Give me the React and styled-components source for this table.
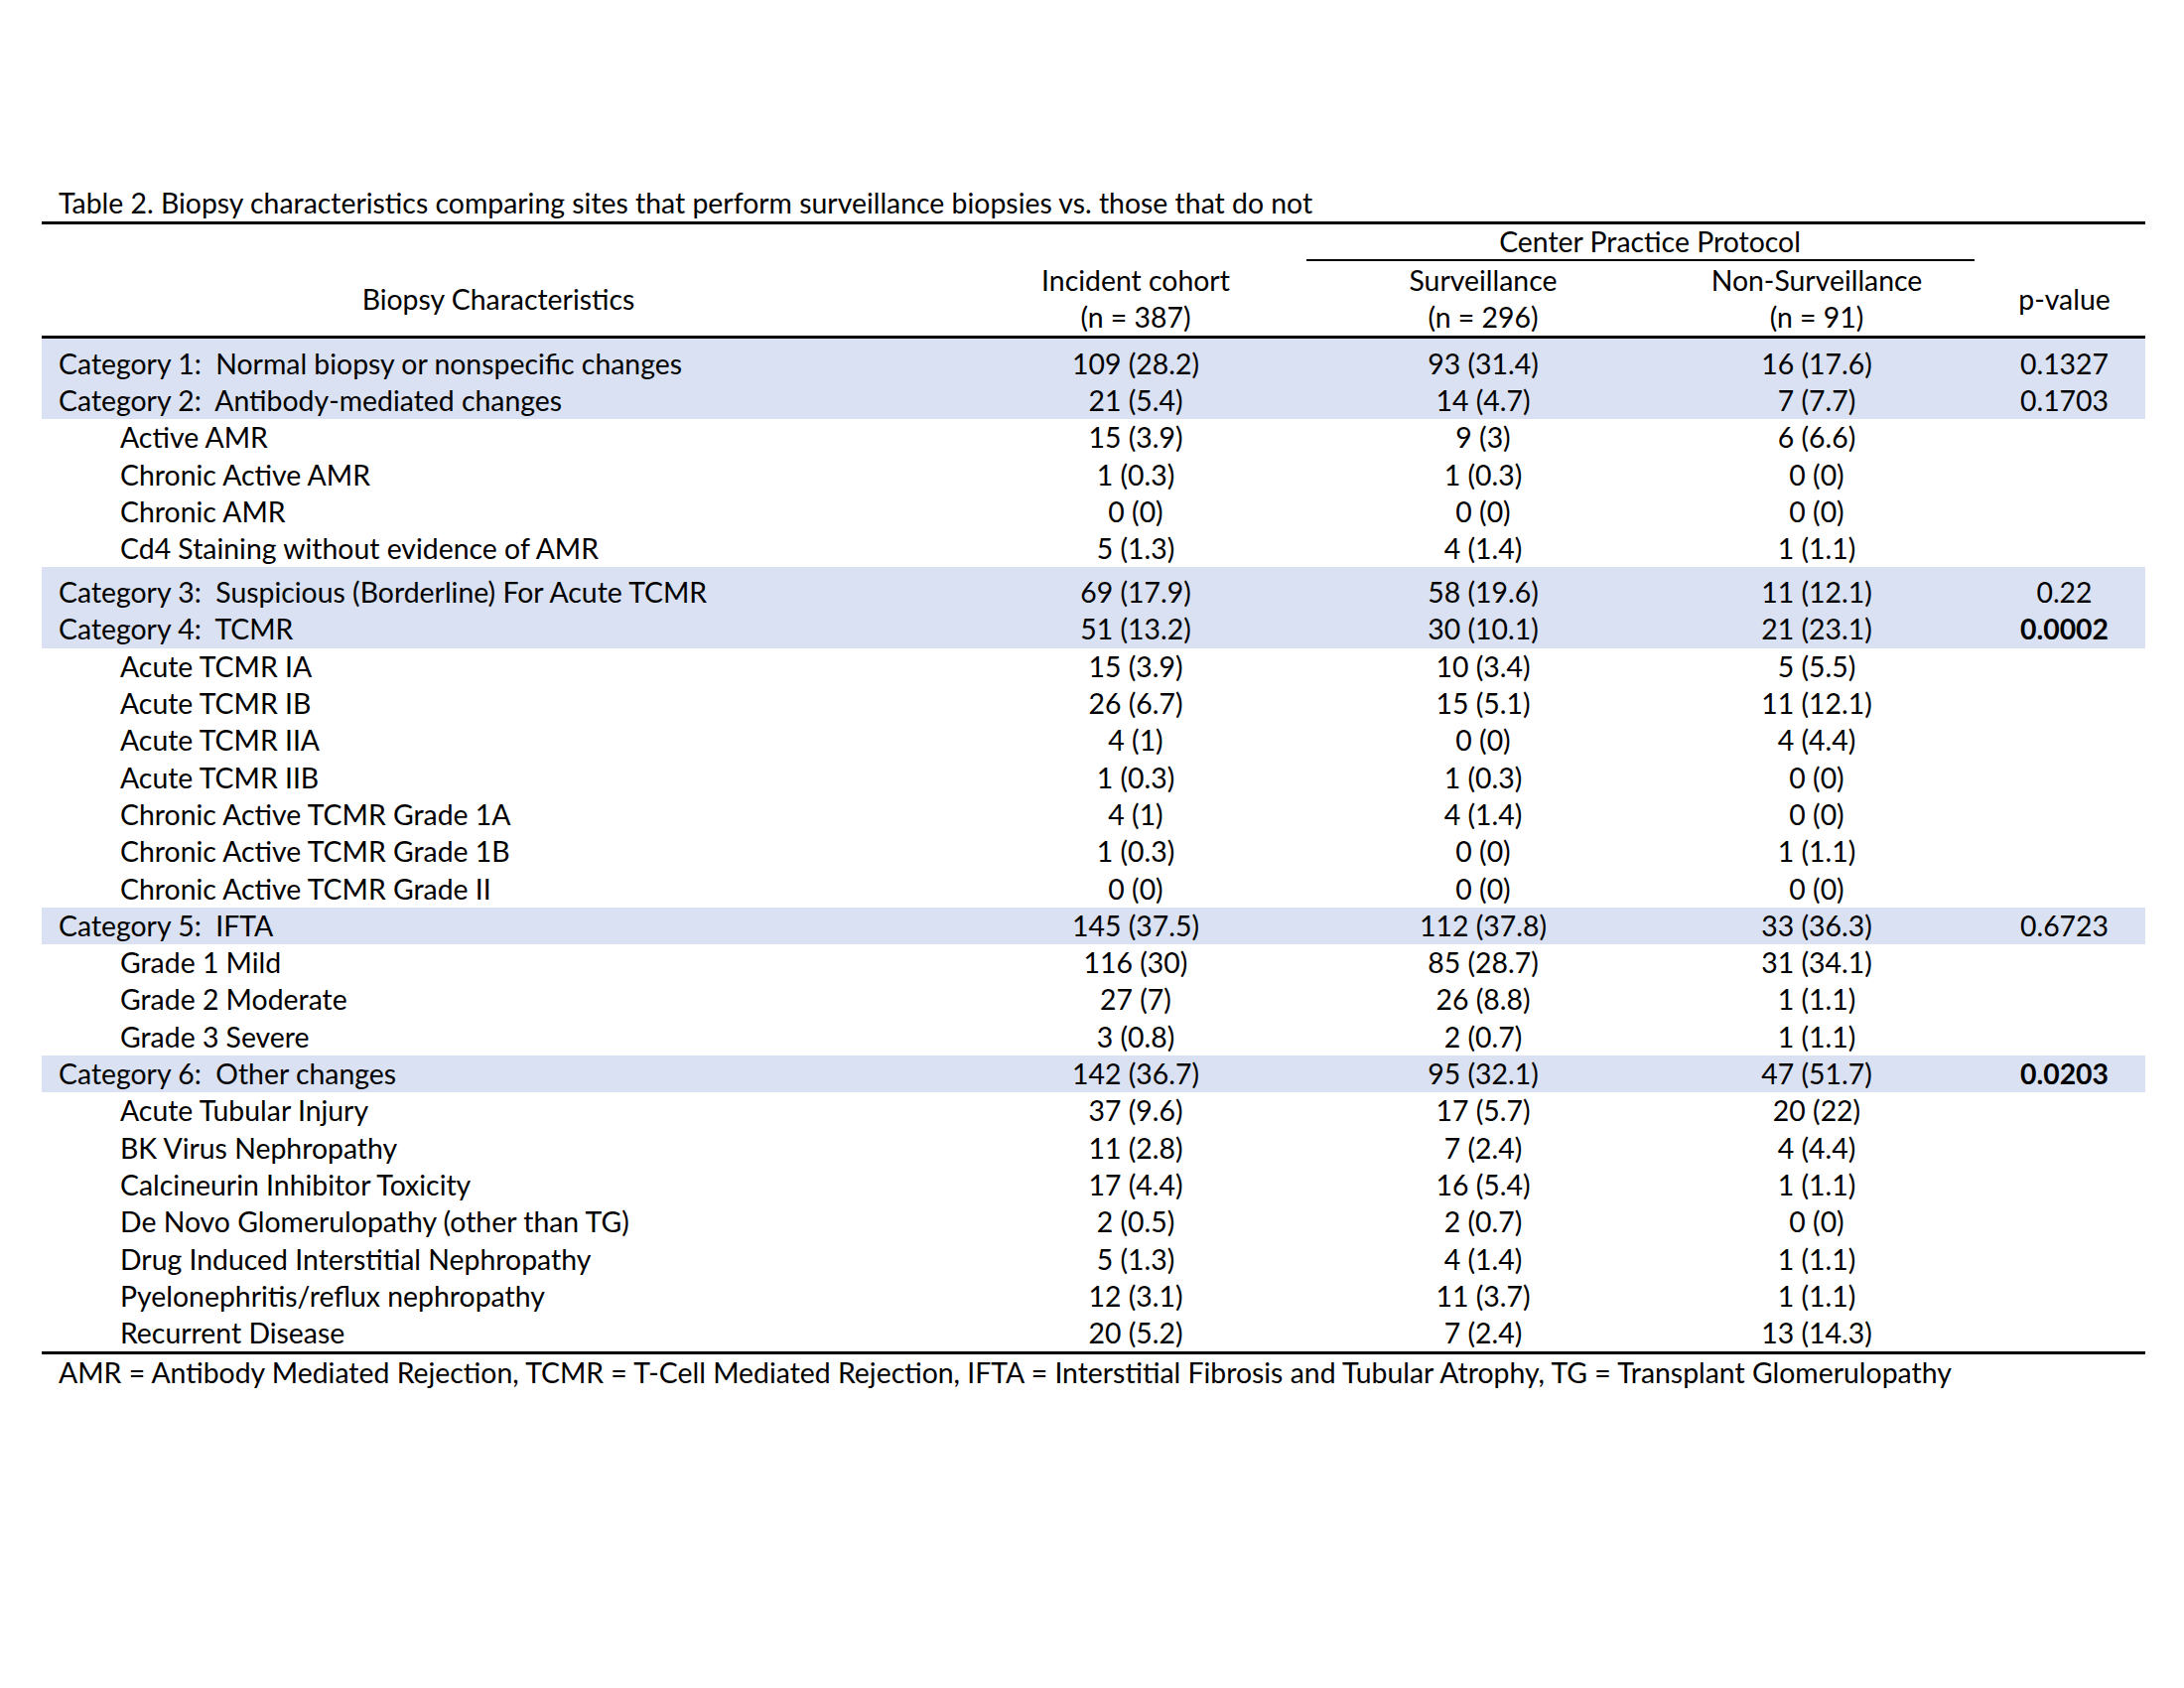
import React from 'react';
import styled, { createGlobalStyle } from 'styled-components';

const GlobalStyle = createGlobalStyle`
  html, body {
    margin: 0;
    padding: 0;
    background: #ffffff;
  }
  body {
    font-family: Lato, "Open Sans", sans-serif;
    color: #000000;
  }
`;

const BAND = '#d9e1f2';
const ROW_H = 37.3;
const FONT = 28.4;

const St = {
  Page: styled.div`
    width: 2200px;
    height: 1700px;
    padding: 186px 0 0 42px;
    box-sizing: border-box;
  `,
  Block: styled.div`
    width: 2119px;
  `,
  Caption: styled.div`
    font-size: ${FONT}px;
    line-height: 37px;
    padding-left: 17px;
    white-space: nowrap;
  `,
  Table: styled.table`
    width: 2119px;
    border-collapse: separate;
    border-spacing: 0;
    table-layout: fixed;
    border-top: 3px solid #000;
    border-bottom: 3px solid #000;
    font-size: ${FONT}px;
  `,
  GroupHead: styled.th`
    font-weight: normal;
    padding: 0;
    height: 35px;
    line-height: 35px;
    text-align: center;
    vertical-align: middle;
  `,
  GroupRule: styled.div`
    border-bottom: 2px solid #000;
    margin: 0 9px 0 -10px;
  `,
  Head: styled.th`
    font-weight: normal;
    padding: 1px 0 0;
    line-height: 37px;
    text-align: center;
    vertical-align: middle;
    border-bottom: 3px solid #000;
  `,
  Row: styled.tr`
    background: ${(p) => (p.$band ? BAND : 'transparent')};
    height: ${(p) => (p.$tall ? 44 : ROW_H)}px;
  `,
  Label: styled.td`
    padding: 0 0 0 ${(p) => (p.$sub ? 79 : 17)}px;
    white-space: pre;
    vertical-align: bottom;
    line-height: ${ROW_H}px;
  `,
  Cell: styled.td`
    padding: 0;
    text-align: center;
    vertical-align: bottom;
    line-height: ${ROW_H}px;
    white-space: nowrap;
    font-weight: ${(p) => (p.$bold ? 700 : 400)};
  `,
  Note: styled.div`
    font-size: ${FONT}px;
    line-height: 37px;
    padding-left: 17px;
    white-space: nowrap;
  `
};

const rows = [
  { label: 'Category 1:  Normal biopsy or nonspecific changes', band: true, tall: true, v: ['109 (28.2)', '93 (31.4)', '16 (17.6)'], p: '0.1327' },
  { label: 'Category 2:  Antibody-mediated changes', band: true, v: ['21 (5.4)', '14 (4.7)', '7 (7.7)'], p: '0.1703' },
  { label: 'Active AMR', v: ['15 (3.9)', '9 (3)', '6 (6.6)'] },
  { label: 'Chronic Active AMR', v: ['1 (0.3)', '1 (0.3)', '0 (0)'] },
  { label: 'Chronic AMR', v: ['0 (0)', '0 (0)', '0 (0)'] },
  { label: 'Cd4 Staining without evidence of AMR', v: ['5 (1.3)', '4 (1.4)', '1 (1.1)'] },
  { label: 'Category 3:  Suspicious (Borderline) For Acute TCMR', band: true, tall: true, v: ['69 (17.9)', '58 (19.6)', '11 (12.1)'], p: '0.22' },
  { label: 'Category 4:  TCMR', band: true, v: ['51 (13.2)', '30 (10.1)', '21 (23.1)'], p: '0.0002', bold: true },
  { label: 'Acute TCMR IA', v: ['15 (3.9)', '10 (3.4)', '5 (5.5)'] },
  { label: 'Acute TCMR IB', v: ['26 (6.7)', '15 (5.1)', '11 (12.1)'] },
  { label: 'Acute TCMR IIA', v: ['4 (1)', '0 (0)', '4 (4.4)'] },
  { label: 'Acute TCMR IIB', v: ['1 (0.3)', '1 (0.3)', '0 (0)'] },
  { label: 'Chronic Active TCMR Grade 1A', v: ['4 (1)', '4 (1.4)', '0 (0)'] },
  { label: 'Chronic Active TCMR Grade 1B', v: ['1 (0.3)', '0 (0)', '1 (1.1)'] },
  { label: 'Chronic Active TCMR Grade II', v: ['0 (0)', '0 (0)', '0 (0)'] },
  { label: 'Category 5:  IFTA', band: true, v: ['145 (37.5)', '112 (37.8)', '33 (36.3)'], p: '0.6723' },
  { label: 'Grade 1 Mild', v: ['116 (30)', '85 (28.7)', '31 (34.1)'] },
  { label: 'Grade 2 Moderate', v: ['27 (7)', '26 (8.8)', '1 (1.1)'] },
  { label: 'Grade 3 Severe', v: ['3 (0.8)', '2 (0.7)', '1 (1.1)'] },
  { label: 'Category 6:  Other changes', band: true, v: ['142 (36.7)', '95 (32.1)', '47 (51.7)'], p: '0.0203', bold: true },
  { label: 'Acute Tubular Injury', v: ['37 (9.6)', '17 (5.7)', '20 (22)'] },
  { label: 'BK Virus Nephropathy', v: ['11 (2.8)', '7 (2.4)', '4 (4.4)'] },
  { label: 'Calcineurin Inhibitor Toxicity', v: ['17 (4.4)', '16 (5.4)', '1 (1.1)'] },
  { label: 'De Novo Glomerulopathy (other than TG)', v: ['2 (0.5)', '2 (0.7)', '0 (0)'] },
  { label: 'Drug Induced Interstitial Nephropathy', v: ['5 (1.3)', '4 (1.4)', '1 (1.1)'] },
  { label: 'Pyelonephritis/reflux nephropathy', v: ['12 (3.1)', '11 (3.7)', '1 (1.1)'] },
  { label: 'Recurrent Disease', v: ['20 (5.2)', '7 (2.4)', '13 (14.3)'] }
];

const App = () => {
  return (
    <St.Page>
      <GlobalStyle />
      <St.Block>
        <St.Caption>
          Table 2. Biopsy characteristics comparing sites that perform surveillance biopsies vs. those that do not
        </St.Caption>
        <St.Table>
          <colgroup>
            <col style={{ width: 920 }} />
            <col style={{ width: 364 }} />
            <col style={{ width: 336 }} />
            <col style={{ width: 336 }} />
            <col style={{ width: 163 }} />
          </colgroup>
          <thead>
            <tr>
              <St.GroupHead />
              <St.GroupHead />
              <St.GroupHead colSpan={2}>
                Center Practice Protocol
                <St.GroupRule />
              </St.GroupHead>
              <St.GroupHead />
            </tr>
            <tr>
              <St.Head>Biopsy Characteristics</St.Head>
              <St.Head>
                Incident cohort
                <br />
                (n = 387)
              </St.Head>
              <St.Head>
                Surveillance
                <br />
                (n = 296)
              </St.Head>
              <St.Head>
                Non-Surveillance
                <br />
                (n = 91)
              </St.Head>
              <St.Head>p-value</St.Head>
            </tr>
          </thead>
          <tbody>
            {rows.map((r) => (
              <St.Row key={r.label} $band={r.band} $tall={r.tall}>
                <St.Label $sub={!r.band}>{r.label}</St.Label>
                {r.v.map((val, i) => (
                  <St.Cell key={i}>{val}</St.Cell>
                ))}
                <St.Cell $bold={r.bold}>{r.p || ''}</St.Cell>
              </St.Row>
            ))}
          </tbody>
        </St.Table>
        <St.Note>
          AMR = Antibody Mediated Rejection, TCMR = T-Cell Mediated Rejection, IFTA = Interstitial Fibrosis and Tubular Atrophy, TG = Transplant Glomerulopathy
        </St.Note>
      </St.Block>
    </St.Page>
  );
};

export default App;
